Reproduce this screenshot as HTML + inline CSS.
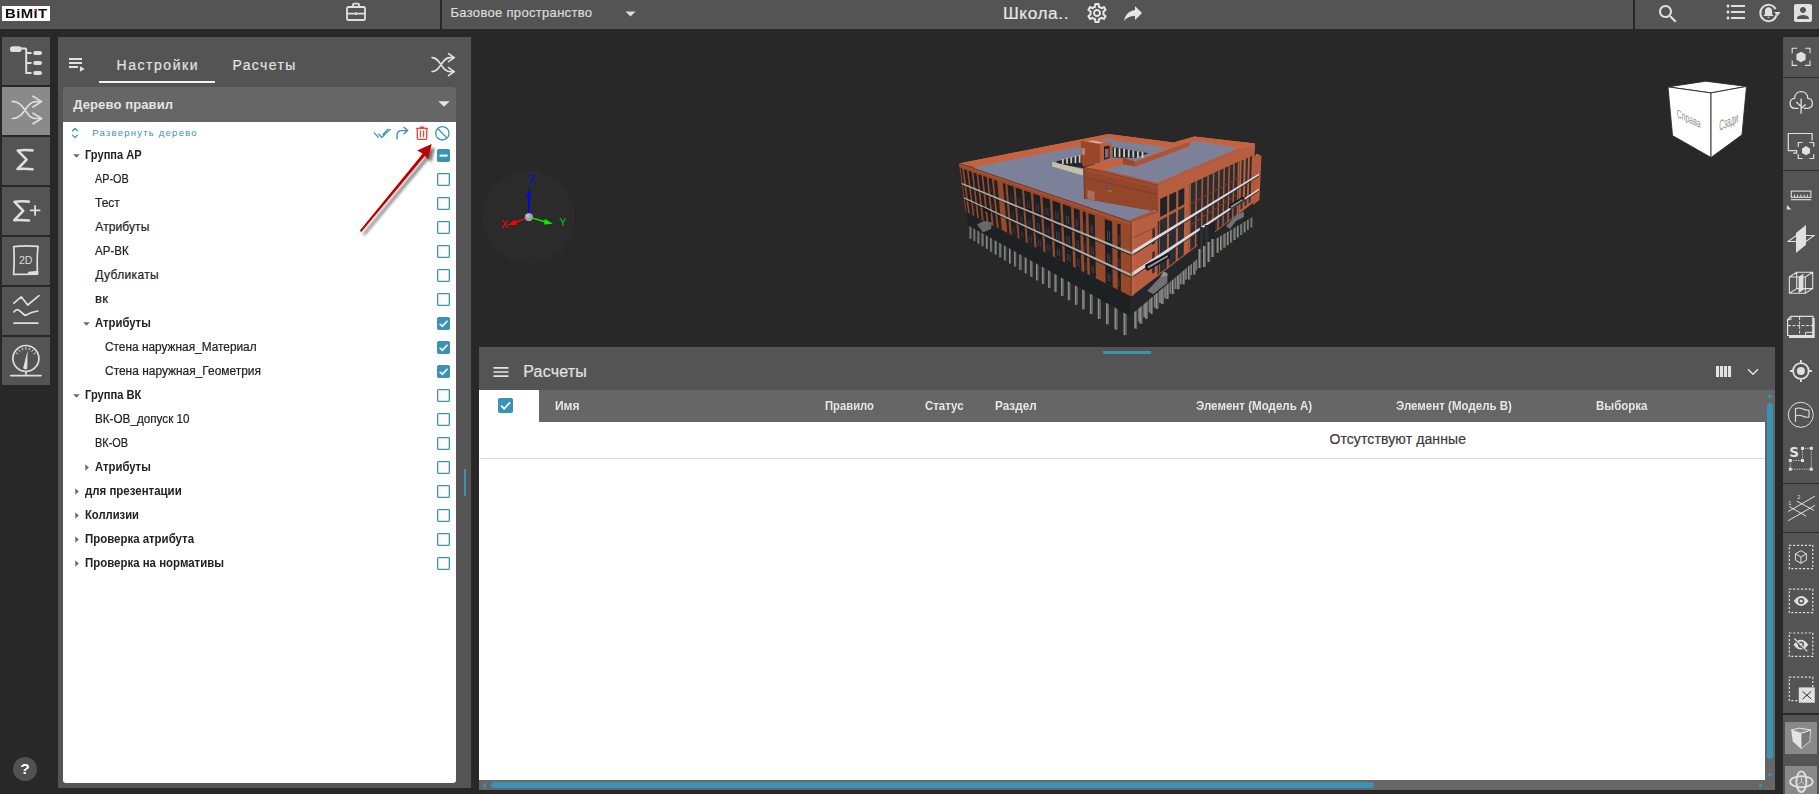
<!DOCTYPE html>
<html lang="ru"><head><meta charset="utf-8"><title>BIMIT</title><style>
html,body{margin:0;padding:0;background:#282828;}
body{width:1819px;height:794px;overflow:hidden;position:relative;font-family:"Liberation Sans",sans-serif;}
.t{position:absolute;white-space:nowrap;transform-origin:0 50%;display:block;}
svg{overflow:visible;display:block;}
i,b{font-style:normal;font-weight:normal;}
</style></head>
<body>
<svg style="position:absolute;left:0;top:0" width="1819" height="794" viewBox="0 0 1819 794"><rect x="969.6" y="225.1" width="1.7" height="13.6" fill="#8c8e8a"/><rect x="970.5" y="225.1" width="0.8" height="13.6" fill="#5f615f"/><rect x="973.5" y="227.3" width="1.7" height="13.8" fill="#8c8e8a"/><rect x="974.4" y="227.3" width="0.8" height="13.8" fill="#5f615f"/><rect x="977.5" y="229.6" width="1.8" height="14.1" fill="#8c8e8a"/><rect x="978.5" y="229.6" width="0.8" height="14.1" fill="#5f615f"/><rect x="981.6" y="231.9" width="1.8" height="14.3" fill="#8c8e8a"/><rect x="982.6" y="231.9" width="0.8" height="14.3" fill="#5f615f"/><rect x="985.9" y="234.3" width="1.8" height="14.6" fill="#8c8e8a"/><rect x="986.9" y="234.3" width="0.8" height="14.6" fill="#5f615f"/><rect x="990.2" y="236.8" width="1.9" height="14.8" fill="#8c8e8a"/><rect x="991.2" y="236.8" width="0.8" height="14.8" fill="#5f615f"/><rect x="994.7" y="239.4" width="1.9" height="15.1" fill="#8c8e8a"/><rect x="995.8" y="239.4" width="0.9" height="15.1" fill="#5f615f"/><rect x="999.3" y="242.0" width="1.9" height="15.4" fill="#8c8e8a"/><rect x="1000.4" y="242.0" width="0.9" height="15.4" fill="#5f615f"/><rect x="1004.1" y="244.7" width="2.0" height="15.7" fill="#8c8e8a"/><rect x="1005.2" y="244.7" width="0.9" height="15.7" fill="#5f615f"/><rect x="1009.0" y="247.5" width="2.0" height="15.9" fill="#8c8e8a"/><rect x="1010.1" y="247.5" width="0.9" height="15.9" fill="#5f615f"/><rect x="1014.1" y="250.3" width="2.0" height="16.2" fill="#8c8e8a"/><rect x="1015.2" y="250.3" width="0.9" height="16.2" fill="#5f615f"/><rect x="1019.3" y="253.3" width="2.1" height="16.6" fill="#8c8e8a"/><rect x="1020.4" y="253.3" width="0.9" height="16.6" fill="#5f615f"/><rect x="1024.7" y="256.4" width="2.1" height="16.9" fill="#8c8e8a"/><rect x="1025.9" y="256.4" width="1.0" height="16.9" fill="#5f615f"/><rect x="1030.2" y="259.5" width="2.2" height="17.2" fill="#8c8e8a"/><rect x="1031.4" y="259.5" width="1.0" height="17.2" fill="#5f615f"/><rect x="1036.0" y="262.8" width="2.2" height="17.5" fill="#8c8e8a"/><rect x="1037.2" y="262.8" width="1.0" height="17.5" fill="#5f615f"/><rect x="1041.9" y="266.1" width="2.3" height="17.9" fill="#8c8e8a"/><rect x="1043.2" y="266.1" width="1.0" height="17.9" fill="#5f615f"/><rect x="1048.1" y="269.6" width="2.3" height="18.3" fill="#8c8e8a"/><rect x="1049.3" y="269.6" width="1.0" height="18.3" fill="#5f615f"/><rect x="1054.4" y="273.2" width="2.3" height="18.6" fill="#8c8e8a"/><rect x="1055.7" y="273.2" width="1.1" height="18.6" fill="#5f615f"/><rect x="1061.0" y="277.0" width="2.4" height="19.0" fill="#8c8e8a"/><rect x="1062.3" y="277.0" width="1.1" height="19.0" fill="#5f615f"/><rect x="1067.8" y="280.8" width="2.4" height="19.4" fill="#8c8e8a"/><rect x="1069.2" y="280.8" width="1.1" height="19.4" fill="#5f615f"/><rect x="1074.9" y="284.9" width="2.5" height="19.9" fill="#8c8e8a"/><rect x="1076.3" y="284.9" width="1.1" height="19.9" fill="#5f615f"/><rect x="1082.2" y="289.0" width="2.6" height="20.3" fill="#8c8e8a"/><rect x="1083.7" y="289.0" width="1.2" height="20.3" fill="#5f615f"/><rect x="1089.9" y="293.3" width="2.6" height="20.7" fill="#8c8e8a"/><rect x="1091.3" y="293.3" width="1.2" height="20.7" fill="#5f615f"/><rect x="1097.8" y="297.8" width="2.7" height="21.2" fill="#8c8e8a"/><rect x="1099.2" y="297.8" width="1.2" height="21.2" fill="#5f615f"/><rect x="1106.0" y="302.5" width="2.7" height="21.7" fill="#8c8e8a"/><rect x="1107.5" y="302.5" width="1.2" height="21.7" fill="#5f615f"/><rect x="1114.5" y="307.3" width="2.8" height="22.2" fill="#8c8e8a"/><rect x="1116.1" y="307.3" width="1.3" height="22.2" fill="#5f615f"/><rect x="1123.5" y="312.4" width="2.9" height="22.7" fill="#8c8e8a"/><rect x="1125.0" y="312.4" width="1.3" height="22.7" fill="#5f615f"/><rect x="1134.3" y="307.7" width="2.8" height="20.8" fill="#939591"/><rect x="1135.8" y="307.7" width="1.2" height="20.8" fill="#626462"/><rect x="1139.6" y="303.1" width="2.7" height="20.5" fill="#939591"/><rect x="1141.1" y="303.1" width="1.2" height="20.5" fill="#626462"/><rect x="1145.0" y="298.5" width="2.7" height="20.2" fill="#939591"/><rect x="1146.5" y="298.5" width="1.2" height="20.2" fill="#626462"/><rect x="1150.4" y="294.0" width="2.6" height="19.8" fill="#939591"/><rect x="1151.8" y="294.0" width="1.2" height="19.8" fill="#626462"/><rect x="1155.7" y="289.4" width="2.6" height="19.5" fill="#939591"/><rect x="1157.1" y="289.4" width="1.2" height="19.5" fill="#626462"/><rect x="1161.1" y="284.8" width="2.5" height="19.2" fill="#939591"/><rect x="1162.5" y="284.8" width="1.1" height="19.2" fill="#626462"/><rect x="1166.4" y="280.2" width="2.5" height="18.8" fill="#939591"/><rect x="1167.8" y="280.2" width="1.1" height="18.8" fill="#626462"/><rect x="1171.8" y="275.6" width="2.4" height="18.5" fill="#939591"/><rect x="1173.1" y="275.6" width="1.1" height="18.5" fill="#626462"/><rect x="1177.1" y="271.0" width="2.4" height="18.2" fill="#939591"/><rect x="1178.5" y="271.0" width="1.1" height="18.2" fill="#626462"/><rect x="1182.5" y="266.5" width="2.3" height="17.8" fill="#939591"/><rect x="1183.8" y="266.5" width="1.0" height="17.8" fill="#626462"/><rect x="1187.9" y="261.9" width="2.3" height="17.5" fill="#939591"/><rect x="1189.1" y="261.9" width="1.0" height="17.5" fill="#626462"/><rect x="1193.2" y="257.3" width="2.2" height="17.2" fill="#939591"/><rect x="1194.4" y="257.3" width="1.0" height="17.2" fill="#626462"/><rect x="1138.1" y="306.8" width="2.0" height="14.9" fill="#7d7f7c"/><rect x="1143.3" y="302.4" width="1.9" height="14.6" fill="#7d7f7c"/><rect x="1148.6" y="298.0" width="1.9" height="14.4" fill="#7d7f7c"/><rect x="1153.8" y="293.5" width="1.9" height="14.1" fill="#7d7f7c"/><rect x="1159.0" y="289.1" width="1.9" height="13.9" fill="#7d7f7c"/><rect x="1164.2" y="284.7" width="1.8" height="13.6" fill="#7d7f7c"/><rect x="1169.5" y="280.3" width="1.8" height="13.4" fill="#7d7f7c"/><rect x="1174.7" y="275.9" width="1.8" height="13.1" fill="#7d7f7c"/><rect x="1179.9" y="271.5" width="1.7" height="12.9" fill="#7d7f7c"/><rect x="1185.1" y="267.0" width="1.7" height="12.6" fill="#7d7f7c"/><rect x="1190.4" y="262.6" width="1.6" height="12.4" fill="#7d7f7c"/><rect x="1195.6" y="258.2" width="1.6" height="12.1" fill="#7d7f7c"/><rect x="1216.6" y="235.9" width="2.2" height="16.8" fill="#8e908c"/><rect x="1217.8" y="235.9" width="1.0" height="16.8" fill="#626462"/><rect x="1220.0" y="233.7" width="2.1" height="16.5" fill="#8e908c"/><rect x="1221.2" y="233.7" width="1.0" height="16.5" fill="#626462"/><rect x="1223.4" y="231.5" width="2.1" height="16.1" fill="#8e908c"/><rect x="1224.5" y="231.5" width="0.9" height="16.1" fill="#626462"/><rect x="1226.8" y="229.4" width="2.0" height="15.7" fill="#8e908c"/><rect x="1227.9" y="229.4" width="0.9" height="15.7" fill="#626462"/><rect x="1230.1" y="227.2" width="2.0" height="15.4" fill="#8e908c"/><rect x="1231.2" y="227.2" width="0.9" height="15.4" fill="#626462"/><rect x="1233.5" y="225.0" width="2.0" height="15.0" fill="#8e908c"/><rect x="1234.6" y="225.0" width="0.9" height="15.0" fill="#626462"/><rect x="1236.9" y="222.8" width="1.9" height="14.6" fill="#8e908c"/><rect x="1238.0" y="222.8" width="0.9" height="14.6" fill="#626462"/><rect x="1240.3" y="220.6" width="1.9" height="14.3" fill="#8e908c"/><rect x="1241.3" y="220.6" width="0.8" height="14.3" fill="#626462"/><rect x="1243.7" y="218.5" width="1.8" height="13.9" fill="#8e908c"/><rect x="1244.7" y="218.5" width="0.8" height="13.9" fill="#626462"/><rect x="1247.1" y="216.3" width="1.8" height="13.5" fill="#8e908c"/><rect x="1248.0" y="216.3" width="0.8" height="13.5" fill="#626462"/><rect x="1250.5" y="214.1" width="1.7" height="13.2" fill="#8e908c"/><rect x="1251.4" y="214.1" width="0.8" height="13.2" fill="#626462"/><polygon points="965.6,211.4 1131.2,296.5 1129.8,316.0 968.0,225.3" fill="#1e2124" /><polygon points="1131.2,296.5 1197.6,247.6 1197.6,258.7 1129.8,316.0" fill="#24272a" /><polygon points="1214.8,225.4 1255.0,203.3 1255.0,215.4 1214.8,239.6" fill="#24272a" /><polygon points="959.0,163.5 1108.5,133.9 1173.6,142.5 1194.4,136.6 1254.9,143.6 1254.9,150.0 1157.6,185.1 1157.0,211.5 1131.2,222.0" fill="#7c8099" /><polygon points="959.0,163.5 1108.5,133.9 1110.0,137.5 1081.0,146.0 975.6,166.8" fill="#c8623d" /><polygon points="959.0,163.5 975.6,166.8 973.0,168.3" fill="#a04b2c" /><polygon points="959.0,163.5 1131.2,222.0 1131.2,296.5 965.6,211.4" fill="#97492b" /><polygon points="1117.4,223.4 1120.5,224.5 1120.9,291.2 1117.8,289.6" fill="#1c1f23" /><polygon points="1104.7,218.9 1112.1,221.6 1112.7,287.0 1105.6,283.3" fill="#1c1f23" /><polygon points="1088.5,213.2 1094.7,215.4 1095.9,278.4 1090.0,275.3" fill="#1c1f23" /><polygon points="1082.7,211.2 1085.7,212.2 1087.3,274.0 1084.5,272.5" fill="#1c1f23" /><polygon points="1073.8,208.0 1079.6,210.0 1081.4,270.9 1075.8,268.0" fill="#1c1f23" /><polygon points="1062.8,204.1 1071.0,207.0 1073.1,266.7 1065.2,262.6" fill="#1c1f23" /><polygon points="1052.4,200.4 1060.2,203.2 1062.7,261.3 1055.2,257.4" fill="#1c1f23" /><polygon points="1042.5,196.9 1049.9,199.6 1052.8,256.2 1045.6,252.5" fill="#1c1f23" /><polygon points="1033.1,193.6 1040.1,196.1 1043.3,251.4 1036.5,247.9" fill="#1c1f23" /><polygon points="1024.1,190.4 1030.8,192.8 1034.4,246.7 1027.9,243.4" fill="#1c1f23" /><polygon points="1015.6,187.4 1022.0,189.7 1025.8,242.3 1019.6,239.2" fill="#1c1f23" /><polygon points="1007.4,184.5 1013.5,186.7 1017.7,238.2 1011.8,235.1" fill="#1c1f23" /><polygon points="1002.8,182.9 1005.2,183.7 1009.7,234.0 1007.3,232.9" fill="#1c1f23" /><polygon points="993.9,179.7 997.1,180.9 1001.8,230.0 998.7,228.4" fill="#1c1f23" /><polygon points="988.5,177.8 991.9,179.0 996.8,227.4 993.6,225.8" fill="#1c1f23" /><polygon points="983.3,176.0 986.6,177.1 991.7,224.8 988.5,223.2" fill="#1c1f23" /><polygon points="978.3,174.2 981.4,175.3 986.7,222.2 983.7,220.7" fill="#1c1f23" /><polygon points="973.4,172.5 976.5,173.6 981.9,219.8 978.9,218.3" fill="#1c1f23" /><polygon points="968.6,170.8 971.6,171.8 977.2,217.4 974.4,215.9" fill="#1c1f23" /><polygon points="964.0,169.2 966.9,170.2 972.7,215.0 969.9,213.6" fill="#1c1f23" /><polygon points="960.5,167.9 962.1,168.5 968.1,212.7 966.5,211.8" fill="#1c1f23" /><polygon points="1118.4,235.0 1118.7,235.1 1118.8,244.6 1118.4,244.4" fill="#6b6874" opacity="0.60"/><polygon points="1119.2,235.3 1119.6,235.5 1119.7,244.9 1119.3,244.8" fill="#6b6874" opacity="0.60"/><polygon points="1118.5,258.2 1118.9,258.4 1119.0,267.1 1118.6,266.9" fill="#6b6874" opacity="0.60"/><polygon points="1119.4,258.6 1119.8,258.7 1119.8,267.5 1119.4,267.3" fill="#6b6874" opacity="0.60"/><polygon points="1118.7,278.5 1119.0,278.7 1119.1,286.7 1118.7,286.5" fill="#6b6874" opacity="0.60"/><polygon points="1119.5,278.9 1119.9,279.1 1119.9,287.1 1119.6,286.9" fill="#6b6874" opacity="0.60"/><polygon points="1107.0,230.7 1107.9,231.0 1108.0,240.2 1107.1,239.9" fill="#6b6874" opacity="0.60"/><polygon points="1109.1,231.5 1109.9,231.8 1110.0,241.0 1109.2,240.7" fill="#6b6874" opacity="0.60"/><polygon points="1107.3,253.3 1108.2,253.7 1108.3,262.2 1107.4,261.8" fill="#6b6874" opacity="0.60"/><polygon points="1109.3,254.2 1110.2,254.6 1110.3,263.1 1109.4,262.7" fill="#6b6874" opacity="0.60"/><polygon points="1107.6,273.1 1108.4,273.5 1108.5,281.3 1107.7,280.9" fill="#6b6874" opacity="0.60"/><polygon points="1109.6,274.1 1110.4,274.5 1110.5,282.3 1109.7,281.9" fill="#6b6874" opacity="0.60"/><polygon points="1090.5,224.4 1091.3,224.7 1091.5,233.6 1090.7,233.3" fill="#6b6874" opacity="0.60"/><polygon points="1092.3,225.1 1093.0,225.4 1093.2,234.3 1092.5,234.0" fill="#6b6874" opacity="0.60"/><polygon points="1091.0,246.2 1091.8,246.5 1092.0,254.7 1091.2,254.4" fill="#6b6874" opacity="0.60"/><polygon points="1092.7,247.0 1093.5,247.3 1093.7,255.5 1092.9,255.2" fill="#6b6874" opacity="0.60"/><polygon points="1091.5,265.3 1092.2,265.7 1092.4,273.2 1091.7,272.8" fill="#6b6874" opacity="0.60"/><polygon points="1093.2,266.1 1093.9,266.5 1094.1,274.0 1093.3,273.7" fill="#6b6874" opacity="0.60"/><polygon points="1083.9,221.9 1084.3,222.0 1084.5,230.8 1084.2,230.6" fill="#6b6874" opacity="0.60"/><polygon points="1084.8,222.2 1085.1,222.4 1085.3,231.1 1085.0,231.0" fill="#6b6874" opacity="0.60"/><polygon points="1084.5,243.4 1084.9,243.5 1085.1,251.6 1084.7,251.4" fill="#6b6874" opacity="0.60"/><polygon points="1085.3,243.7 1085.7,243.9 1085.9,252.0 1085.5,251.8" fill="#6b6874" opacity="0.60"/><polygon points="1085.0,262.2 1085.4,262.3 1085.6,269.7 1085.2,269.6" fill="#6b6874" opacity="0.60"/><polygon points="1085.8,262.6 1086.2,262.7 1086.4,270.1 1086.0,270.0" fill="#6b6874" opacity="0.60"/><polygon points="1075.8,218.8 1076.5,219.1 1076.8,227.7 1076.1,227.4" fill="#6b6874" opacity="0.60"/><polygon points="1077.4,219.4 1078.1,219.7 1078.4,228.3 1077.7,228.0" fill="#6b6874" opacity="0.60"/><polygon points="1076.5,239.9 1077.2,240.2 1077.4,248.1 1076.8,247.8" fill="#6b6874" opacity="0.60"/><polygon points="1078.1,240.6 1078.8,240.9 1079.0,248.8 1078.3,248.5" fill="#6b6874" opacity="0.60"/><polygon points="1077.1,258.3 1077.8,258.7 1078.0,265.9 1077.3,265.6" fill="#6b6874" opacity="0.60"/><polygon points="1078.7,259.1 1079.3,259.4 1079.6,266.7 1078.9,266.4" fill="#6b6874" opacity="0.60"/><polygon points="1065.6,214.9 1066.6,215.3 1066.9,223.7 1066.0,223.3" fill="#6b6874" opacity="0.59"/><polygon points="1067.9,215.8 1068.9,216.2 1069.2,224.6 1068.2,224.2" fill="#6b6874" opacity="0.59"/><polygon points="1066.4,235.5 1067.4,235.9 1067.7,243.7 1066.7,243.2" fill="#6b6874" opacity="0.59"/><polygon points="1068.7,236.5 1069.7,236.9 1069.9,244.7 1069.0,244.2" fill="#6b6874" opacity="0.59"/><polygon points="1067.1,253.5 1068.1,254.0 1068.4,261.1 1067.4,260.6" fill="#6b6874" opacity="0.59"/><polygon points="1069.4,254.6 1070.3,255.1 1070.6,262.2 1069.6,261.7" fill="#6b6874" opacity="0.59"/><polygon points="1055.2,211.0 1056.1,211.3 1056.5,219.5 1055.5,219.1" fill="#6b6874" opacity="0.55"/><polygon points="1057.3,211.8 1058.3,212.1 1058.6,220.3 1057.7,220.0" fill="#6b6874" opacity="0.55"/><polygon points="1056.1,231.0 1057.0,231.4 1057.4,238.9 1056.4,238.5" fill="#6b6874" opacity="0.55"/><polygon points="1058.2,231.9 1059.2,232.3 1059.5,239.9 1058.6,239.5" fill="#6b6874" opacity="0.55"/><polygon points="1056.9,248.5 1057.8,249.0 1058.1,255.9 1057.2,255.4" fill="#6b6874" opacity="0.55"/><polygon points="1059.0,249.6 1059.9,250.0 1060.3,257.0 1059.3,256.5" fill="#6b6874" opacity="0.55"/><polygon points="1045.2,207.2 1046.1,207.5 1046.5,215.5 1045.6,215.1" fill="#6b6874" opacity="0.51"/><polygon points="1047.3,208.0 1048.2,208.3 1048.6,216.3 1047.7,215.9" fill="#6b6874" opacity="0.51"/><polygon points="1046.3,226.7 1047.1,227.1 1047.5,234.5 1046.7,234.1" fill="#6b6874" opacity="0.51"/><polygon points="1048.3,227.6 1049.2,228.0 1049.6,235.4 1048.7,235.0" fill="#6b6874" opacity="0.51"/><polygon points="1047.2,243.8 1048.1,244.3 1048.4,251.0 1047.6,250.6" fill="#6b6874" opacity="0.51"/><polygon points="1049.2,244.8 1050.1,245.2 1050.4,252.0 1049.6,251.6" fill="#6b6874" opacity="0.51"/><polygon points="1035.8,203.6 1036.6,203.9 1037.1,211.7 1036.2,211.3" fill="#6b6874" opacity="0.47"/><polygon points="1037.7,204.3 1038.6,204.6 1039.0,212.5 1038.2,212.1" fill="#6b6874" opacity="0.47"/><polygon points="1036.9,222.7 1037.8,223.0 1038.2,230.2 1037.4,229.8" fill="#6b6874" opacity="0.47"/><polygon points="1038.9,223.5 1039.7,223.9 1040.1,231.1 1039.3,230.7" fill="#6b6874" opacity="0.47"/><polygon points="1038.0,239.4 1038.8,239.7 1039.2,246.3 1038.4,245.9" fill="#6b6874" opacity="0.47"/><polygon points="1039.9,240.3 1040.7,240.7 1041.1,247.3 1040.3,246.9" fill="#6b6874" opacity="0.47"/><polygon points="1026.7,200.2 1027.5,200.5 1028.1,208.0 1027.3,207.7" fill="#6b6874" opacity="0.43"/><polygon points="1028.6,200.9 1029.4,201.2 1029.9,208.8 1029.1,208.5" fill="#6b6874" opacity="0.43"/><polygon points="1028.0,218.8 1028.8,219.1 1029.3,226.1 1028.5,225.8" fill="#6b6874" opacity="0.43"/><polygon points="1029.9,219.6 1030.7,219.9 1031.1,227.0 1030.4,226.6" fill="#6b6874" opacity="0.43"/><polygon points="1029.2,235.1 1029.9,235.5 1030.4,241.9 1029.6,241.5" fill="#6b6874" opacity="0.43"/><polygon points="1031.0,236.0 1031.8,236.3 1032.2,242.8 1031.4,242.4" fill="#6b6874" opacity="0.43"/><polygon points="1018.2,196.9 1018.9,197.2 1019.5,204.6 1018.7,204.3" fill="#6b6874" opacity="0.38"/><polygon points="1019.9,197.6 1020.7,197.9 1021.3,205.3 1020.5,205.0" fill="#6b6874" opacity="0.38"/><polygon points="1019.6,215.1 1020.3,215.4 1020.8,222.3 1020.1,221.9" fill="#6b6874" opacity="0.38"/><polygon points="1021.3,215.9 1022.1,216.2 1022.6,223.1 1021.8,222.7" fill="#6b6874" opacity="0.38"/><polygon points="1020.8,231.0 1021.5,231.4 1022.0,237.6 1021.3,237.3" fill="#6b6874" opacity="0.38"/><polygon points="1022.5,231.9 1023.3,232.2 1023.7,238.5 1023.0,238.1" fill="#6b6874" opacity="0.38"/><polygon points="1010.0,193.8 1010.7,194.0 1011.3,201.3 1010.6,201.0" fill="#6b6874" opacity="0.34"/><polygon points="1011.7,194.4 1012.4,194.7 1013.0,202.0 1012.3,201.7" fill="#6b6874" opacity="0.34"/><polygon points="1011.5,211.6 1012.2,211.9 1012.7,218.6 1012.0,218.2" fill="#6b6874" opacity="0.34"/><polygon points="1013.1,212.3 1013.9,212.6 1014.4,219.3 1013.7,219.0" fill="#6b6874" opacity="0.34"/><polygon points="1012.8,227.1 1013.5,227.5 1014.0,233.6 1013.3,233.2" fill="#6b6874" opacity="0.34"/><polygon points="1014.4,227.9 1015.1,228.3 1015.6,234.4 1014.9,234.1" fill="#6b6874" opacity="0.34"/><polygon points="1004.3,191.6 1004.6,191.7 1005.2,198.9 1004.9,198.7" fill="#6b6874" opacity="0.30"/><polygon points="1005.0,191.9 1005.3,192.0 1005.9,199.1 1005.6,199.0" fill="#6b6874" opacity="0.30"/><polygon points="1005.9,209.1 1006.2,209.3 1006.8,215.8 1006.5,215.7" fill="#6b6874" opacity="0.30"/><polygon points="1006.5,209.4 1006.8,209.5 1007.4,216.1 1007.1,216.0" fill="#6b6874" opacity="0.30"/><polygon points="1007.3,224.5 1007.5,224.6 1008.1,230.6 1007.8,230.5" fill="#6b6874" opacity="0.30"/><polygon points="1007.9,224.8 1008.2,224.9 1008.7,230.9 1008.4,230.8" fill="#6b6874" opacity="0.30"/><polygon points="995.7,188.3 996.0,188.5 996.7,195.4 996.3,195.3" fill="#6b6874" opacity="0.25"/><polygon points="996.5,188.7 996.9,188.8 997.6,195.8 997.2,195.6" fill="#6b6874" opacity="0.25"/><polygon points="997.3,205.4 997.7,205.6 998.3,212.0 998.0,211.8" fill="#6b6874" opacity="0.25"/><polygon points="998.2,205.8 998.6,206.0 999.2,212.4 998.8,212.2" fill="#6b6874" opacity="0.25"/><polygon points="998.8,220.4 999.2,220.5 999.8,226.4 999.4,226.2" fill="#6b6874" opacity="0.25"/><polygon points="999.7,220.8 1000.0,221.0 1000.6,226.8 1000.2,226.7" fill="#6b6874" opacity="0.25"/><polygon points="990.4,186.3 990.8,186.5 991.5,193.3 991.1,193.2" fill="#6b6874" opacity="0.22"/><polygon points="991.3,186.7 991.7,186.8 992.4,193.7 992.0,193.5" fill="#6b6874" opacity="0.22"/><polygon points="992.1,203.1 992.5,203.3 993.2,209.6 992.8,209.4" fill="#6b6874" opacity="0.22"/><polygon points="993.0,203.5 993.4,203.7 994.1,210.0 993.7,209.9" fill="#6b6874" opacity="0.22"/><polygon points="993.6,217.9 994.0,218.0 994.6,223.8 994.2,223.6" fill="#6b6874" opacity="0.22"/><polygon points="994.6,218.3 995.0,218.5 995.5,224.3 995.2,224.1" fill="#6b6874" opacity="0.22"/><polygon points="961.9,184.2 1131.2,254.2 1131.2,255.8 962.0,185.2" fill="#15171a" opacity="0.7"/><polygon points="961.7,182.8 1131.2,251.9 1131.2,254.5 961.9,184.4" fill="#a8aaa3" /><polygon points="963.8,198.3 1131.2,276.2 1131.2,277.8 963.9,199.4" fill="#15171a" opacity="0.7"/><polygon points="963.6,196.9 1131.2,273.9 1131.2,276.5 963.8,198.5" fill="#a8aaa3" /><polygon points="959.0,163.5 1131.2,222.0 1131.2,225.4 959.3,165.7" fill="#a5502f" /><path d="M959 163.5L1131.2 222" stroke="#6a3220" stroke-width="0.700" fill="none"/><polygon points="1131.2,222.0 1157.3,212.0 1157.6,185.1 1254.9,145.5 1253.0,203.0 1131.2,296.5" fill="#b75d40" /><polygon points="1253.5,157.5 1261.5,156.0 1259.5,200.0 1253.0,205.0" fill="#b45a3d" /><polygon points="1253.5,157.5 1257.0,153.5 1261.5,156.0" fill="#c8623d" /><polygon points="1239.7,161.0 1189.5,184.2 1188.7,251.2 1238.4,213.3" fill="#2a2d31" /><polygon points="1191.0,183.5 1189.5,184.2 1188.7,252.4 1190.2,251.2" fill="#b45a3c" /><polygon points="1197.1,180.6 1195.7,181.3 1194.8,247.7 1196.3,246.5" fill="#b45a3c" /><polygon points="1203.1,177.9 1201.6,178.6 1200.7,243.1 1202.2,242.0" fill="#b45a3c" /><polygon points="1208.9,175.2 1207.4,175.9 1206.4,238.8 1207.9,237.7" fill="#b45a3c" /><polygon points="1214.4,172.7 1212.9,173.4 1211.9,234.6 1213.3,233.4" fill="#b45a3c" /><polygon points="1219.8,170.2 1218.3,170.9 1217.2,230.5 1218.6,229.4" fill="#b45a3c" /><polygon points="1225.0,167.8 1223.5,168.5 1222.3,226.6 1223.7,225.5" fill="#b45a3c" /><polygon points="1230.0,165.5 1228.5,166.2 1227.2,222.8 1228.7,221.7" fill="#b45a3c" /><polygon points="1234.8,163.3 1233.3,164.0 1232.0,219.2 1233.4,218.0" fill="#b45a3c" /><polygon points="1239.4,161.1 1237.9,161.8 1236.6,215.6 1238.0,214.5" fill="#b45a3c" /><polygon points="1239.3,176.7 1189.2,204.2 1189.2,205.8 1239.3,177.9" fill="#7a3c28" opacity="0.8"/><polygon points="1238.9,193.0 1189.0,225.1 1189.0,226.7 1238.9,194.2" fill="#7a3c28" opacity="0.8"/><polygon points="1243.7,159.8 1241.7,160.7 1240.4,209.7 1242.4,208.2" fill="#2a2d31" /><polygon points="1248.0,157.8 1246.0,158.7 1244.6,206.5 1246.6,205.0" fill="#2a2d31" /><polygon points="1252.0,155.9 1250.0,156.8 1248.6,203.5 1250.5,202.0" fill="#2a2d31" /><polygon points="1167.2,195.8 1160.2,199.0 1160.1,217.1 1167.1,213.4" fill="#202327" /><polygon points="1167.1,216.4 1160.1,220.3 1159.9,273.1 1166.8,267.9" fill="#2a2d31" /><polygon points="1176.3,191.5 1169.3,194.8 1169.2,212.2 1176.1,208.5" fill="#202327" /><polygon points="1176.1,211.5 1169.2,215.3 1168.8,266.3 1175.7,261.1" fill="#2a2d31" /><polygon points="1184.4,187.8 1178.4,190.6 1178.2,207.4 1184.2,204.2" fill="#202327" /><polygon points="1184.2,207.0 1178.2,210.3 1177.8,259.5 1183.7,255.0" fill="#2a2d31" /><polygon points="1159.3,220.7 1157.8,221.5 1157.6,274.9 1159.1,273.7" fill="#2a2d31" /><polygon points="1154.8,227.8 1152.4,229.2 1152.3,245.0 1154.8,243.5" fill="#2a2d31" /><polygon points="1154.7,250.8 1152.3,252.5 1152.2,273.9 1154.7,272.1" fill="#2a2d31" /><path d="M1131.200 238.500L1157.300 226.500" stroke="#7a3c28" stroke-width="0.600" fill="none"/><polygon points="1131.2,251.6 1259.0,173.6 1259.0,175.4 1131.2,255.3" fill="#d6dadc" /><polygon points="1131.2,255.3 1259.0,175.6 1259.0,176.4 1131.2,256.5" fill="#3a3030" /><polygon points="1131.2,272.9 1259.0,188.4 1259.0,190.2 1131.2,277.1" fill="#d6dadc" /><polygon points="1131.2,277.2 1259.0,190.4 1259.0,191.2 1131.2,278.3" fill="#3a3030" /><path d="M1131.200 222V296.500" stroke="#6a3220" stroke-width="0.800"/><path d="M1133 222V296" stroke="#c97553" stroke-width="0.800"/><polygon points="1197.6,232.0 1214.8,221.0 1214.8,236.0 1197.6,252.0" fill="#202326" /><rect x="1199.8" y="227" width="3.400" height="26" fill="#2c2f32"/><rect x="1204.8" y="225" width="3.400" height="25" fill="#2c2f32"/><rect x="1198.5" y="249" width="2.600" height="19" fill="#8f918e"/><rect x="1200.0" y="249" width="1.100" height="19" fill="#5f615f"/><rect x="1203.0" y="246" width="2.600" height="21" fill="#8f918e"/><rect x="1204.5" y="246" width="1.100" height="21" fill="#5f615f"/><rect x="1207.5" y="242" width="2.600" height="20" fill="#8f918e"/><rect x="1209.0" y="242" width="1.100" height="20" fill="#5f615f"/><rect x="1211.5" y="239" width="2.600" height="18" fill="#8f918e"/><rect x="1213.0" y="239" width="1.100" height="18" fill="#5f615f"/><polygon points="1145.2,264.8 1168.4,252.7 1170.0,255.7 1169.5,258.0 1147.5,271.0 1145.2,268.5" fill="#15171a" /><polygon points="1147.5,266.5 1167.5,255.3 1168.2,256.8 1148.5,268.3" fill="#9496a2" /><polygon points="1229.0,205.0 1243.0,196.5 1244.5,198.0 1244.5,200.5 1231.0,209.0 1229.0,207.5" fill="#15171a" /><polygon points="1230.5,206.3 1242.5,199.0 1243.0,200.5 1231.5,207.8" fill="#9496a2" /><polygon points="1147.2,291.0 1160.3,276.9 1167.4,273.8 1167.4,282.9 1153.3,294.0" fill="#6f7173" /><polygon points="1160.3,276.9 1163.5,271.5 1167.4,273.0 1167.4,276.0" fill="#8e9092" /><polygon points="1226.0,226.0 1237.0,214.5 1244.0,211.5 1244.0,217.0 1236.0,221.0 1230.0,229.0" fill="#6f7173" /><polygon points="977.0,224.5 984.0,221.0 992.0,222.5 991.0,229.0 983.0,232.5" fill="#66686a" /><polygon points="983.0,207.0 991.0,211.5 991.0,214.0 983.0,209.5" fill="#15171a" /><polygon points="1083.5,167.1 1157.6,185.1 1157.3,212.0 1084.2,199.0" fill="#94462b" /><polygon points="1083.5,167.1 1157.6,185.1 1157.6,188.5 1083.6,170.5" fill="#a04b2d" /><path d="M1083.5 167.1L1157.6 185.1" stroke="#6a3220" stroke-width="0.800" fill="none"/><path d="M1084 177.500L1157.300 194.500" stroke="#6f341f" stroke-width="0.600"/><path d="M1083.8 167.1L1084.5 199" stroke="#6a3220" stroke-width="0.700"/><polygon points="1087.5,190.0 1094.6,191.7 1094.6,200.8 1087.5,199.0" fill="#a7705d" /><polygon points="1131.2,222.0 1157.3,212.0 1155.0,210.0 1129.5,219.8" fill="#a9522f" /><polygon points="1084.2,199.0 1157.0,212.0 1155.0,210.0 1129.5,219.8 1120.0,217.0" fill="#7c8099" /><polygon points="1103.6,169.9 1157.0,183.0 1238.8,148.3 1189.7,142.7 1135.5,166.4 1123.0,164.3" fill="#7c8099" /><polygon points="1157.0,183.0 1238.8,148.3 1254.9,145.5 1157.6,185.1" fill="#b9583a" /><polygon points="1238.8,148.3 1254.9,143.6 1254.9,145.5 1240.0,149.6" fill="#c8623d" /><polygon points="1083.5,167.1 1103.6,169.9 1157.0,183.0 1157.6,185.1" fill="#a9522f" /><polygon points="1083.5,167.1 1122.5,157.5 1135.5,161.5 1189.5,141.5 1194.4,136.6 1197.0,139.5 1189.7,142.7 1135.5,166.4 1123.0,164.3 1103.6,169.9" fill="#c8623d" /><polygon points="1122.5,157.5 1135.5,161.5 1135.5,166.4 1123.0,164.3" fill="#9c482b" /><polygon points="1135.5,161.5 1189.5,141.5 1189.7,146.0 1135.5,166.4" fill="#b4522f" /><polygon points="1173.6,142.5 1194.4,136.6 1254.9,143.6 1238.8,148.3 1195.0,140.5 1176.0,146.0" fill="#c8623d" /><polygon points="1108.5,133.9 1173.6,142.5 1173.6,146.5 1150.0,152.5 1112.0,139.5" fill="#c8623d" /><polygon points="1118.0,141.0 1166.0,147.0 1150.0,152.0 1114.0,146.5" fill="#7c8099" /><polygon points="1112.6,147.0 1148.6,153.2 1134.8,158.0 1112.6,157.4" fill="#23272a" /><rect x="1114.0" y="147.5" width="1.800" height="9.5" fill="#cfcdbf"/><rect x="1118.6" y="148.2" width="1.800" height="8.9" fill="#cfcdbf"/><rect x="1123.2" y="149.0" width="1.800" height="8.3" fill="#cfcdbf"/><rect x="1127.8" y="149.8" width="1.800" height="7.7" fill="#cfcdbf"/><rect x="1132.4" y="150.5" width="1.800" height="7.1" fill="#cfcdbf"/><rect x="1137.0" y="151.2" width="1.800" height="6.5" fill="#cfcdbf"/><rect x="1141.6" y="152.0" width="1.800" height="5.9" fill="#cfcdbf"/><polygon points="1056.6,161.3 1094.6,152.5 1094.6,164.3 1082.9,168.0 1056.6,164.0" fill="#23272a" /><rect x="1062.0" y="159.0" width="1.700" height="5.0" fill="#cfcdbf"/><rect x="1066.2" y="158.1" width="1.700" height="5.6" fill="#cfcdbf"/><rect x="1070.4" y="157.2" width="1.700" height="6.2" fill="#cfcdbf"/><rect x="1074.6" y="156.3" width="1.700" height="6.8" fill="#cfcdbf"/><rect x="1078.8" y="155.4" width="1.700" height="7.4" fill="#cfcdbf"/><rect x="1083.0" y="154.5" width="1.700" height="8.0" fill="#cfcdbf"/><rect x="1087.2" y="153.6" width="1.700" height="8.6" fill="#cfcdbf"/><rect x="1091.4" y="152.7" width="1.700" height="9.2" fill="#cfcdbf"/><polygon points="1052.2,161.7 1083.0,169.3 1083.0,175.6 1052.2,166.6" fill="#c4c0a8" /><polygon points="1080.8,140.8 1100.0,144.3 1100.0,162.5 1083.5,167.1 1081.5,163.0" fill="#9a482b" /><polygon points="1100.0,144.3 1112.0,143.0 1112.0,158.5 1100.0,162.5" fill="#b75d40" /><polygon points="1080.8,140.8 1092.0,139.3 1112.0,143.0 1100.0,144.3" fill="#c8623d" /><polygon points="1087.0,141.3 1093.0,140.5 1104.0,142.7 1099.0,143.4" fill="#c9b8a8" /><polygon points="1104.0,146.5 1109.5,145.8 1109.5,158.0 1104.0,159.8" fill="#1c1f23" /><polygon points="1105.0,149.0 1108.5,148.5 1108.5,157.0 1105.0,158.2" fill="#7f6a6e" /><polygon points="1081.5,148.0 1085.0,148.6 1085.0,155.0 1081.5,154.5" fill="#b38673" /><path d="M1107.300 184.500V190.500" stroke="#4a3fd0" stroke-width="0.800"/><path d="M1107.300 190.500L1103.500 192" stroke="#e02020" stroke-width="0.900"/><path d="M1107.300 190.500L1112 191.300" stroke="#20d020" stroke-width="1.100"/></svg><svg style="position:absolute;left:0;top:0" width="700" height="300" viewBox="0 0 700 300"><circle cx="528.900" cy="217.100" r="46" fill="#2b2b2b"/><path d="M528.900 217.100L512 223.500" stroke="#ff0000" stroke-width="1.500"/><path d="M507.300 225.300L514.800 219.800L516.200 224.400z" fill="#ff0000"/><ellipse cx="514.300" cy="222.700" rx="2.400" ry="2.200" fill="#ff0000"/><path d="M528.900 217.100L546 222" stroke="#00ee00" stroke-width="1.500"/><path d="M552.900 223.700L544.800 218.800L544 224.600z" fill="#00ee00"/><path d="M528.900 217.100V197" stroke="#0000ff" stroke-width="1.600"/><path d="M528.900 188.700L526.600 197.300H531.200z" fill="#0000ff"/><circle cx="528.900" cy="217.100" r="4.200" fill="#a0a0a0"/><circle cx="527.800" cy="216" r="2" fill="#bdbdbd"/><text x="529" y="182.500" font-family="Liberation Sans,sans-serif" font-size="10" fill="#0000ff">Z</text><text x="501.200" y="227.500" font-family="Liberation Sans,sans-serif" font-size="10" fill="#ff0000">X</text><text x="559.500" y="225.600" font-family="Liberation Sans,sans-serif" font-size="10" fill="#00cc00">Y</text></svg><svg style="position:absolute;left:0;top:0" width="1819" height="300" viewBox="0 0 1819 300"><polygon points="1668.0,86.9 1705.7,81.2 1746.5,86.4 1711.0,92.9" fill="#ffffff" stroke="#2b2b2b" stroke-width="0.900" stroke-linejoin="round"/><polygon points="1668.0,86.9 1711.0,92.9 1711.0,157.5 1672.5,135.6" fill="#ffffff" stroke="#2b2b2b" stroke-width="0.900" stroke-linejoin="round"/><polygon points="1711.0,92.9 1746.5,86.4 1742.0,134.8 1711.0,157.5" fill="#ffffff" stroke="#2b2b2b" stroke-width="0.900" stroke-linejoin="round"/><text font-family="Liberation Sans,sans-serif" fill="#8e8e8e" font-size="8.600" transform="translate(1676.800 117) skewY(25) scale(0.800 1.350)">Справа</text><text font-family="Liberation Sans,sans-serif" fill="#8e8e8e" font-size="8.200" transform="translate(1719.300 131) skewY(-25) scale(0.800 1.800)">Сзади</text></svg>
<div style="position:absolute;left:0px;top:0px;width:1819px;height:29px;background:#545454;"></div>
<div style="position:absolute;left:2px;top:6px;width:48px;height:15px;background:#fff;overflow:hidden;"><span class="t" style="left:3.400px;top:1.500px;font-size:12.400px;line-height:12px;color:#111;font-weight:700;letter-spacing:0.300px;transform:scaleX(1.205)">BiMiT</span><i style="position:absolute;left:33.100px;top:3.100px;width:2.100px;height:1.900px;background:#f00"></i></div>
<svg style="position:absolute;left:344px;top:0.2px;" width="24" height="24" viewBox="0 0 24 24"><rect x="3" y="7" width="18" height="13" rx="1.6" fill="none" stroke="#e0e0e0" stroke-width="1.8"/><path d="M9 7V4.6a1 1 0 0 1 1-1h4a1 1 0 0 1 1 1V7" fill="none" stroke="#e0e0e0" stroke-width="1.8"/><path d="M3 13.6h7.6M13.4 13.6H21" stroke="#e0e0e0" stroke-width="1.6"/><rect x="10.6" y="12.4" width="2.8" height="2.6" fill="#e0e0e0"/></svg>
<div style="position:absolute;left:439.5px;top:0px;width:2px;height:29px;background:#282828;"></div>
<span class="t" style="left:450.50px;top:6.20px;font-size:13px;line-height:13px;color:#dcdcdc;-webkit-text-stroke:0.2px #dcdcdc;letter-spacing:0.315px;">Базовое пространство</span>
<svg style="position:absolute;left:625px;top:10.5px;" width="11" height="6" viewBox="0 0 11 6"><path d="M0.4 0.4h10.2L5.5 5.6z" fill="#dcdcdc"/></svg>
<span class="t" style="left:1003.00px;top:4.94px;font-size:17.2px;line-height:17.2px;color:#e6e6e6;-webkit-text-stroke:0.2px #e6e6e6;letter-spacing:0.612px;">Школа..</span>
<svg style="position:absolute;left:1084.8px;top:0.8px;" width="24" height="24" viewBox="0 0 24 24"><path d="M19.43 12.98c.04-.32.07-.64.07-.98 0-.34-.03-.66-.07-.98l2.11-1.65c.19-.15.24-.42.12-.64l-2-3.46c-.09-.16-.26-.25-.44-.25-.06 0-.12.01-.17.03l-2.49 1c-.52-.4-1.08-.73-1.69-.98l-.38-2.65C14.46 2.18 14.25 2 14 2h-4c-.25 0-.46.18-.49.42l-.38 2.65c-.61.25-1.17.59-1.69.98l-2.49-1c-.06-.02-.12-.03-.18-.03-.17 0-.34.09-.43.25l-2 3.46c-.13.22-.07.49.12.64l2.11 1.65c-.04.32-.07.65-.07.98 0 .33.03.66.07.98l-2.11 1.65c-.19.15-.24.42-.12.64l2 3.46c.09.16.26.25.44.25.06 0 .12-.01.17-.03l2.49-1c.52.4 1.08.73 1.69.98l.38 2.65c.03.24.24.42.49.42h4c.25 0 .46-.18.49-.42l.38-2.65c.61-.25 1.17-.59 1.69-.98l2.49 1c.06.02.12.03.18.03.17 0 .34-.09.43-.25l2-3.46c.12-.22.07-.49-.12-.64l-2.11-1.65zm-1.98-1.71c.04.31.05.52.05.73 0 .21-.02.43-.05.73l-.14 1.13.89.7 1.08.84-.7 1.21-1.27-.51-1.04-.42-.9.68c-.43.32-.84.56-1.25.73l-1.06.43-.16 1.13-.2 1.35h-1.4l-.19-1.35-.16-1.13-1.06-.43c-.43-.18-.83-.41-1.23-.71l-.91-.7-1.06.43-1.27.51-.7-1.21 1.08-.84.89-.7-.14-1.13c-.03-.31-.05-.54-.05-.74s.02-.43.05-.73l.14-1.13-.89-.7-1.08-.84.7-1.21 1.27.51 1.04.42.9-.68c.43-.32.84-.56 1.25-.73l1.06-.43.16-1.13.2-1.35h1.39l.19 1.35.16 1.13 1.06.43c.43.18.83.41 1.23.71l.91.7 1.06-.43 1.27-.51.7 1.21-1.07.85-.89.7.14 1.13zM12 8c-2.21 0-4 1.79-4 4s1.79 4 4 4 4-1.79 4-4-1.79-4-4-4zm0 6c-1.1 0-2-.9-2-2s.9-2 2-2 2 .9 2 2-.9 2-2 2z" fill="#e6e6e6"/></svg>
<svg style="position:absolute;left:1120.5px;top:0.5px;" width="24" height="24" viewBox="0 0 24 24"><path d="M21 12l-7-7v4C7 10 4 15 3 20c2.5-3.5 6-5.1 11-5.1V19l7-7z" fill="#e6e6e6"/></svg>
<div style="position:absolute;left:1633px;top:0px;width:2px;height:29px;background:#282828;"></div>
<svg style="position:absolute;left:1655.6px;top:1.7px;" width="24" height="24" viewBox="0 0 24 24"><path d="M15.5 14h-.79l-.28-.27C15.41 12.59 16 11.11 16 9.5 16 5.91 13.09 3 9.5 3S3 5.91 3 9.5 5.91 16 9.5 16c1.61 0 3.09-.59 4.23-1.57l.27.28v.79l5 4.99L20.49 19l-4.99-5zm-6 0C7.01 14 5 11.99 5 9.5S7.01 5 9.5 5 14 7.01 14 9.5 11.99 14 9.5 14z" fill="#e0e0e0"/></svg>
<svg style="position:absolute;left:1723.5px;top:0px;" width="24" height="24" viewBox="0 0 24 24"><path d="M4 10.5c-.83 0-1.5.67-1.5 1.5s.67 1.5 1.5 1.5 1.5-.67 1.5-1.5-.67-1.5-1.5-1.5zm0-6c-.83 0-1.5.67-1.5 1.5S3.17 7.500 4 7.500 5.500 6.830 5.500 6 4.830 4.500 4 4.500zm0 12c-.83 0-1.5.68-1.5 1.5s.68 1.5 1.5 1.5 1.5-.68 1.5-1.5-.67-1.500-1.500-1.500zM7 19h14v-2H7v2zm0-6h14v-2H7v2zm0-8v2h14V5H7z" fill="#e0e0e0"/></svg>
<svg style="position:absolute;left:1757px;top:1px;" width="24" height="24" viewBox="0 0 24 24"><path d="M3.3 12a8.200 8.200 0 1 0 2.600-6" fill="none" stroke="#e0e0e0" stroke-width="2" transform="rotate(150 11.500 12)"/><path d="M17.300 11h6.200l-3.100 4.200z" fill="#e0e0e0"/><path d="M11.5 6.3c-2.2 0-3.6 1.7-3.6 3.9v3l-1.2 1.3v.6h9.600v-.6l-1.200-1.300v-3c0-2.200-1.400-3.900-3.600-3.900zM10.400 15.800a1.100 1.100 0 0 0 2.200 0z" fill="#e0e0e0"/></svg>
<svg style="position:absolute;left:1791px;top:0.9px;" width="24" height="24" viewBox="0 0 24 24"><path d="M3 5v14c0 1.100.89 2 2 2h14c1.100 0 2-.9 2-2V5c0-1.100-.9-2-2-2H5c-1.110 0-2 .9-2 2zm12 4c0 1.660-1.340 3-3 3s-3-1.340-3-3 1.340-3 3-3 3 1.340 3 3zm-9 8c0-2 4-3.100 6-3.100s6 1.100 6 3.100v1H6v-1z" fill="#e0e0e0"/></svg>
<div style="position:absolute;left:2px;top:37px;width:48px;height:48px;background:#545454;"><svg width="48" height="48" viewBox="0 0 48 48" style="position:absolute;left:0;top:0"><rect x="8" y="9.3" width="11.6" height="5.7" rx="2.85" fill="#dedede"/><path d="M19 11.400h4.200q1 0 1 1V36h4.600M24.200 16.100h4.600M24.200 26h4.600" fill="none" stroke="#dedede" stroke-linecap="round" stroke-linejoin="round" stroke-width="2" stroke-linecap="butt"/><rect x="31.200" y="14" width="8.800" height="4" rx="2" fill="#dedede"/><rect x="31.200" y="24" width="8.800" height="4" rx="2" fill="#dedede"/><rect x="31.200" y="34" width="8.800" height="4" rx="2" fill="#dedede"/></svg></div>
<div style="position:absolute;left:2px;top:87px;width:48px;height:48px;background:#8a8a8a;"><svg width="48" height="48" viewBox="0 0 48 48" style="position:absolute;left:0;top:0"><path d="M10.400 14.400C23.400 14.400 23 31.500 34 31.500H39M10.400 31.500C23.400 31.500 23 14.600 34 14.600H39" fill="none" stroke="#dedede" stroke-linecap="round" stroke-linejoin="round" stroke-width="1.700"/><path d="M31 9.200L39.600 14.600L31 20M31 26.300L39.600 31.500L31 36.800" fill="none" stroke="#dedede" stroke-linecap="round" stroke-linejoin="round" stroke-width="1.700"/></svg></div>
<div style="position:absolute;left:2px;top:137px;width:48px;height:48px;background:#545454;"><svg width="48" height="48" viewBox="0 0 48 48" style="position:absolute;left:0;top:0"><path d="M30.500 13.400Q22 12.600 15.800 13.600L24.600 22.600L15.600 32Q23 31.400 30.600 32.300" fill="none" stroke="#dedede" stroke-linecap="round" stroke-linejoin="round" stroke-width="2.600"/></svg></div>
<div style="position:absolute;left:2px;top:187px;width:48px;height:48px;background:#545454;"><svg width="48" height="48" viewBox="0 0 48 48" style="position:absolute;left:0;top:0"><path d="M26.800 14.600Q19 13.800 12.600 14.800L21.200 23.800L12.300 33.200Q19.500 32.600 27 33.500" fill="none" stroke="#dedede" stroke-linecap="round" stroke-linejoin="round" stroke-width="2.600"/><path d="M28.600 23.400h9M33.100 18.900v9" fill="none" stroke="#dedede" stroke-linecap="round" stroke-linejoin="round" stroke-width="1.800"/></svg></div>
<div style="position:absolute;left:2px;top:237px;width:48px;height:48px;background:#545454;"><svg width="48" height="48" viewBox="0 0 48 48" style="position:absolute;left:0;top:0"><path d="M11.800 9.600Q23 8.200 36 9.400Q34.600 23 35.600 37.200L11.600 37.400Q12.600 23 11.800 9.600z" fill="none" stroke="#dedede" stroke-linecap="round" stroke-linejoin="round" stroke-width="1.700"/><path d="M25.500 37.200L26.500 34.800L35.200 33.800L35.600 37.200z" fill="#dedede"/><text x="23.600" y="26.800" font-size="10.500" text-anchor="middle" fill="#dedede" font-family="Liberation Sans,sans-serif">2D</text></svg></div>
<div style="position:absolute;left:2px;top:287px;width:48px;height:48px;background:#545454;"><svg width="48" height="48" viewBox="0 0 48 48" style="position:absolute;left:0;top:0"><path d="M11.900 16.200L19.200 9.800L25.700 18L37 8.600M11.900 24.900Q14.500 21.500 17 23.300L23.200 28.500L29.500 25.500L35.800 24M11.900 36.200H35.800" fill="none" stroke="#dedede" stroke-linecap="round" stroke-linejoin="round" stroke-width="1.700"/></svg></div>
<div style="position:absolute;left:2px;top:337px;width:48px;height:48px;background:#545454;"><svg width="48" height="48" viewBox="0 0 48 48" style="position:absolute;left:0;top:0"><circle cx="23.900" cy="21.500" r="13" fill="none" stroke="#dedede" stroke-linecap="round" stroke-linejoin="round" stroke-width="1.700"/><path d="M15.9 16.9L14.4 16.0M18.0 14.5L16.8 13.1M20.8 12.9L20.1 11.2M23.9 12.3L23.9 10.5M27.0 12.9L27.7 11.2M29.8 14.5L31.0 13.1M31.9 16.9L33.4 16.0" fill="none" stroke="#dedede" stroke-linecap="round" stroke-linejoin="round" stroke-width="1"/><path d="M25.600 13.500L25.300 31.500Q23 33.500 21.200 31z" fill="#dedede"/><path d="M23.900 34.500V38.600M8.800 38.600H39" fill="none" stroke="#dedede" stroke-linecap="round" stroke-linejoin="round" stroke-width="1.700"/></svg></div>
<div style="position:absolute;left:13px;top:756.5px;width:24px;height:24px;background:#525252;border-radius:50%;"><span class="t" style="left:7.300px;top:4.600px;font-size:15.500px;line-height:15px;color:#fff;font-weight:700">?</span></div>
<div style="position:absolute;left:58px;top:37px;width:413px;height:751px;background:#545454;"></div>
<svg style="position:absolute;left:69px;top:58px;" width="17" height="14" viewBox="0 0 17 14"><path d="M0 0h13v2H0zM0 4.100h13v2H0zM0 8h9v2H0zM10.900 8.300v5.500l4.800-2.750z" fill="#e2e2e2"/></svg>
<span class="t" style="left:116.50px;top:58.15px;font-size:14px;line-height:14px;color:#e2e2e2;-webkit-text-stroke:0.2px #e2e2e2;letter-spacing:1.545px;">Настройки</span>
<span class="t" style="left:232.40px;top:58.15px;font-size:14px;line-height:14px;color:#e2e2e2;-webkit-text-stroke:0.2px #e2e2e2;letter-spacing:1.401px;">Расчеты</span>
<div style="position:absolute;left:99px;top:81.2px;width:116px;height:2.2px;background:#f2f2f2;"></div>
<svg style="position:absolute;left:430px;top:52px;" width="27" height="25" viewBox="0 0 27 25"><path d="M2 5.600C11 5.600 11 19.600 20 19.600H24M2 19.600C11 19.600 11 5.600 20 5.600H24" fill="none" stroke="#e2e2e2" stroke-linecap="round" stroke-linejoin="round" stroke-width="1.600"/><path d="M18.500 1.600L24.200 5.600L18.500 9.600M18.500 15.600L24.200 19.600L18.500 23.600" fill="none" stroke="#e2e2e2" stroke-linecap="round" stroke-linejoin="round" stroke-width="1.600"/></svg>
<div style="position:absolute;left:63px;top:87px;width:393px;height:35px;background:#666666;border-radius:3px 3px 0 0;"></div>
<span class="t" style="left:73.20px;top:97.80px;font-size:13px;line-height:13px;color:#e4e4e4;font-weight:700;letter-spacing:0.112px;">Дерево правил</span>
<svg style="position:absolute;left:438px;top:101.4px;" width="12" height="6" viewBox="0 0 12 6"><path d="M0.300 0.200h11.400L6 5.800z" fill="#e4e4e4"/></svg>
<div style="position:absolute;left:63px;top:122px;width:393px;height:660.5px;background:#fff;border-radius:0 0 3px 3px;"></div>
<svg style="position:absolute;left:69px;top:127px;" width="12" height="12" viewBox="0 0 12 12"><path d="M3.200 4.300L6 1.500L8.800 4.300M3.200 7.900L6 10.700L8.800 7.900" fill="none" stroke="#3a93b5" stroke-width="1.300"/></svg>
<span class="t" style="left:92.30px;top:128.06px;font-size:9.5px;line-height:9.5px;color:#3a93b5;letter-spacing:1.231px;">Развернуть дерево</span>
<svg style="position:absolute;left:373px;top:127.5px;" width="19" height="11" viewBox="0 0 19 11"><path d="M0.900 4.400L5.600 9.600M5.400 5.800L8.800 9.600L17.500 0.900M9.600 7L15.200 0.900" fill="none" stroke="#3a93b5" stroke-width="1.300"/></svg>
<svg style="position:absolute;left:395px;top:125.5px;" width="15" height="14.5" viewBox="0 0 15 14.5"><path d="M2 13.400V9.500Q2 4.600 7 4.600H12.300M8.600 0.900L12.600 4.600L8.600 8.300" fill="none" stroke="#3a93b5" stroke-width="1.400"/></svg>
<svg style="position:absolute;left:415px;top:126px;" width="14" height="14.5" viewBox="0 0 14 14.5"><path d="M1 2.300H13M4.600 1.200H9.400" stroke="#f44336" stroke-width="1.300" fill="none"/><path d="M2.300 2.600V12.600Q2.300 13.300 3 13.300H11Q11.700 13.300 11.700 12.600V2.600" stroke="#f44336" stroke-width="1.300" fill="none"/><path d="M5.400 4.400V11.300M8.600 4.400V11.300" stroke="#f44336" stroke-width="1.200" fill="none"/></svg>
<svg style="position:absolute;left:434px;top:125px;" width="17" height="17" viewBox="0 0 17 17"><circle cx="8.400" cy="8.300" r="6.700" fill="none" stroke="#3a93b5" stroke-width="1.300"/><path d="M3.700 3.500L13.100 13.100" stroke="#3a93b5" stroke-width="1.300"/></svg>
<span class="t" style="left:85.30px;top:149.04px;font-size:12px;line-height:12px;color:#222;font-weight:700;transform:scaleX(0.9240);">Группа АР</span>
<svg style="position:absolute;left:72.7px;top:153.8px;" width="7" height="4" viewBox="0 0 7 4"><path d="M0.200 0.200h6.600L3.500 3.700z" fill="#6a6a6a"/></svg>
<svg style="position:absolute;left:437px;top:148.7px" width="13" height="13" viewBox="0 0 13 13"><rect x="0" y="0" width="13" height="13" rx="1.800" fill="#3a93b5"/><rect x="2.600" y="5.600" width="8" height="2" fill="#fff"/></svg>
<span class="t" style="left:95.30px;top:173.04px;font-size:12px;line-height:12px;color:#222;-webkit-text-stroke:0.2px #222;transform:scaleX(0.9025);">АР-ОВ</span>
<svg style="position:absolute;left:437px;top:172.7px" width="13" height="13" viewBox="0 0 13 13"><rect x="0.650" y="0.650" width="11.7" height="11.7" rx="0.800" fill="#fff" stroke="#3a93b5" stroke-width="1.300"/></svg>
<span class="t" style="left:95.30px;top:197.04px;font-size:12px;line-height:12px;color:#222;-webkit-text-stroke:0.2px #222;transform:scaleX(0.9990);">Тест</span>
<svg style="position:absolute;left:437px;top:196.7px" width="13" height="13" viewBox="0 0 13 13"><rect x="0.650" y="0.650" width="11.7" height="11.7" rx="0.800" fill="#fff" stroke="#3a93b5" stroke-width="1.300"/></svg>
<span class="t" style="left:95.30px;top:221.04px;font-size:12px;line-height:12px;color:#222;-webkit-text-stroke:0.2px #222;letter-spacing:0.094px;">Атрибуты</span>
<svg style="position:absolute;left:437px;top:220.7px" width="13" height="13" viewBox="0 0 13 13"><rect x="0.650" y="0.650" width="11.7" height="11.7" rx="0.800" fill="#fff" stroke="#3a93b5" stroke-width="1.300"/></svg>
<span class="t" style="left:95.30px;top:245.04px;font-size:12px;line-height:12px;color:#222;-webkit-text-stroke:0.2px #222;transform:scaleX(0.9629);">АР-ВК</span>
<svg style="position:absolute;left:437px;top:244.7px" width="13" height="13" viewBox="0 0 13 13"><rect x="0.650" y="0.650" width="11.7" height="11.7" rx="0.800" fill="#fff" stroke="#3a93b5" stroke-width="1.300"/></svg>
<span class="t" style="left:95.30px;top:269.04px;font-size:12px;line-height:12px;color:#222;-webkit-text-stroke:0.2px #222;letter-spacing:0.336px;">Дубликаты</span>
<svg style="position:absolute;left:437px;top:268.7px" width="13" height="13" viewBox="0 0 13 13"><rect x="0.650" y="0.650" width="11.7" height="11.7" rx="0.800" fill="#fff" stroke="#3a93b5" stroke-width="1.300"/></svg>
<span class="t" style="left:95.30px;top:293.04px;font-size:12px;line-height:12px;color:#222;-webkit-text-stroke:0.2px #222;transform:scaleX(1.1183);">вк</span>
<svg style="position:absolute;left:437px;top:292.7px" width="13" height="13" viewBox="0 0 13 13"><rect x="0.650" y="0.650" width="11.7" height="11.7" rx="0.800" fill="#fff" stroke="#3a93b5" stroke-width="1.300"/></svg>
<span class="t" style="left:95.30px;top:317.04px;font-size:12px;line-height:12px;color:#222;font-weight:700;transform:scaleX(0.9411);">Атрибуты</span>
<svg style="position:absolute;left:82.7px;top:321.8px;" width="7" height="4" viewBox="0 0 7 4"><path d="M0.200 0.200h6.600L3.500 3.700z" fill="#6a6a6a"/></svg>
<svg style="position:absolute;left:437px;top:316.7px" width="13" height="13" viewBox="0 0 13 13"><rect x="0" y="0" width="13" height="13" rx="1.800" fill="#3a93b5"/><path d="M2.70 6.70L5.30 9.30L10.50 3.70" fill="none" stroke="#fff" stroke-width="1.50"/></svg>
<span class="t" style="left:105.20px;top:341.04px;font-size:12px;line-height:12px;color:#222;-webkit-text-stroke:0.2px #222;transform:scaleX(0.9881);">Стена наружная_Материал</span>
<svg style="position:absolute;left:437px;top:340.7px" width="13" height="13" viewBox="0 0 13 13"><rect x="0" y="0" width="13" height="13" rx="1.800" fill="#3a93b5"/><path d="M2.70 6.70L5.30 9.30L10.50 3.70" fill="none" stroke="#fff" stroke-width="1.50"/></svg>
<span class="t" style="left:105.20px;top:365.04px;font-size:12px;line-height:12px;color:#222;-webkit-text-stroke:0.2px #222;transform:scaleX(0.9953);">Стена наружная_Геометрия</span>
<svg style="position:absolute;left:437px;top:364.7px" width="13" height="13" viewBox="0 0 13 13"><rect x="0" y="0" width="13" height="13" rx="1.800" fill="#3a93b5"/><path d="M2.70 6.70L5.30 9.30L10.50 3.70" fill="none" stroke="#fff" stroke-width="1.50"/></svg>
<span class="t" style="left:85.30px;top:389.04px;font-size:12px;line-height:12px;color:#222;font-weight:700;transform:scaleX(0.9294);">Группа ВК</span>
<svg style="position:absolute;left:72.7px;top:393.8px;" width="7" height="4" viewBox="0 0 7 4"><path d="M0.200 0.200h6.600L3.500 3.700z" fill="#6a6a6a"/></svg>
<svg style="position:absolute;left:437px;top:388.7px" width="13" height="13" viewBox="0 0 13 13"><rect x="0.650" y="0.650" width="11.7" height="11.7" rx="0.800" fill="#fff" stroke="#3a93b5" stroke-width="1.300"/></svg>
<span class="t" style="left:95.30px;top:413.04px;font-size:12px;line-height:12px;color:#222;-webkit-text-stroke:0.2px #222;transform:scaleX(0.9745);">ВК-ОВ_допуск 10</span>
<svg style="position:absolute;left:437px;top:412.7px" width="13" height="13" viewBox="0 0 13 13"><rect x="0.650" y="0.650" width="11.7" height="11.7" rx="0.800" fill="#fff" stroke="#3a93b5" stroke-width="1.300"/></svg>
<span class="t" style="left:95.30px;top:437.04px;font-size:12px;line-height:12px;color:#222;-webkit-text-stroke:0.2px #222;transform:scaleX(0.9111);">ВК-ОВ</span>
<svg style="position:absolute;left:437px;top:436.7px" width="13" height="13" viewBox="0 0 13 13"><rect x="0.650" y="0.650" width="11.7" height="11.7" rx="0.800" fill="#fff" stroke="#3a93b5" stroke-width="1.300"/></svg>
<span class="t" style="left:95.30px;top:461.04px;font-size:12px;line-height:12px;color:#222;font-weight:700;transform:scaleX(0.9411);">Атрибуты</span>
<svg style="position:absolute;left:84.7px;top:463.5px;" width="4" height="7" viewBox="0 0 4 7"><path d="M0.300 0.200v6.600L3.800 3.500z" fill="#6a6a6a"/></svg>
<svg style="position:absolute;left:437px;top:460.7px" width="13" height="13" viewBox="0 0 13 13"><rect x="0.650" y="0.650" width="11.7" height="11.7" rx="0.800" fill="#fff" stroke="#3a93b5" stroke-width="1.300"/></svg>
<span class="t" style="left:85.30px;top:485.04px;font-size:12px;line-height:12px;color:#222;font-weight:700;transform:scaleX(0.9552);">для презентации</span>
<svg style="position:absolute;left:74.7px;top:487.5px;" width="4" height="7" viewBox="0 0 4 7"><path d="M0.300 0.200v6.600L3.800 3.500z" fill="#6a6a6a"/></svg>
<svg style="position:absolute;left:437px;top:484.7px" width="13" height="13" viewBox="0 0 13 13"><rect x="0.650" y="0.650" width="11.7" height="11.7" rx="0.800" fill="#fff" stroke="#3a93b5" stroke-width="1.300"/></svg>
<span class="t" style="left:85.30px;top:509.04px;font-size:12px;line-height:12px;color:#222;font-weight:700;transform:scaleX(0.9359);">Коллизии</span>
<svg style="position:absolute;left:74.7px;top:511.5px;" width="4" height="7" viewBox="0 0 4 7"><path d="M0.300 0.200v6.600L3.800 3.500z" fill="#6a6a6a"/></svg>
<svg style="position:absolute;left:437px;top:508.7px" width="13" height="13" viewBox="0 0 13 13"><rect x="0.650" y="0.650" width="11.7" height="11.7" rx="0.800" fill="#fff" stroke="#3a93b5" stroke-width="1.300"/></svg>
<span class="t" style="left:85.30px;top:533.04px;font-size:12px;line-height:12px;color:#222;font-weight:700;transform:scaleX(0.9528);">Проверка атрибута</span>
<svg style="position:absolute;left:74.7px;top:535.5px;" width="4" height="7" viewBox="0 0 4 7"><path d="M0.300 0.200v6.600L3.800 3.500z" fill="#6a6a6a"/></svg>
<svg style="position:absolute;left:437px;top:532.7px" width="13" height="13" viewBox="0 0 13 13"><rect x="0.650" y="0.650" width="11.7" height="11.7" rx="0.800" fill="#fff" stroke="#3a93b5" stroke-width="1.300"/></svg>
<span class="t" style="left:85.30px;top:557.04px;font-size:12px;line-height:12px;color:#222;font-weight:700;transform:scaleX(0.9534);">Проверка на нормативы</span>
<svg style="position:absolute;left:74.7px;top:559.5px;" width="4" height="7" viewBox="0 0 4 7"><path d="M0.300 0.200v6.600L3.800 3.500z" fill="#6a6a6a"/></svg>
<svg style="position:absolute;left:437px;top:556.7px" width="13" height="13" viewBox="0 0 13 13"><rect x="0.650" y="0.650" width="11.7" height="11.7" rx="0.800" fill="#fff" stroke="#3a93b5" stroke-width="1.300"/></svg>
<div style="position:absolute;left:464.3px;top:469px;width:1.3px;height:27px;background:#3a93b5;"></div>
<svg style="position:absolute;left:340px;top:130px;" width="120" height="120" viewBox="0 0 120 120"><defs><filter id="ash" x="-20%" y="-20%" width="150%" height="150%"><feGaussianBlur stdDeviation="1.500"/></filter></defs><g transform="translate(3.200 3.400)" filter="url(#ash)" opacity="0.550"><path d="M19.700 100.700L82.800 23.600L77.100 20.400L91.700 13.900L88.100 29.200L85.200 25.600L21.300 102z" fill="#000"/></g><path d="M19.700 100.700L82.800 23.600L77.100 20.400L91.700 13.900L88.100 29.200L85.200 25.600L21.300 102z" fill="#c00000"/></svg>
<div style="position:absolute;left:479px;top:347px;width:1296px;height:443px;background:#545454;"></div>
<div style="position:absolute;left:1103px;top:351px;width:48px;height:3px;background:#3a93b5;"></div>
<svg style="position:absolute;left:490.9px;top:361.6px;" width="20" height="20" viewBox="0 0 24 24"><path d="M3 18h18v-2H3v2zm0-5h18v-2H3v2zm0-7v2h18V6H3z" fill="#e2e2e2"/></svg>
<span class="t" style="left:523.30px;top:363.76px;font-size:16px;line-height:16px;color:#e2e2e2;-webkit-text-stroke:0.2px #e2e2e2;letter-spacing:0.185px;">Расчеты</span>
<svg style="position:absolute;left:1715.8px;top:365.7px;" width="15.2" height="11.1" viewBox="0 0 15.2 11.1"><path d="M0 0h3.100v11.100H0zM4 0h3.100v11.100H4zM8 0h3.100v11.100H8zM12 0h3.100v11.100H12z" fill="#e2e2e2"/></svg>
<svg style="position:absolute;left:1747px;top:368px;" width="12" height="8" viewBox="0 0 12 8"><path d="M1 1.200L6 6.200L11 1.200" fill="none" stroke="#e2e2e2" stroke-width="1.500"/></svg>
<div style="position:absolute;left:479px;top:390px;width:1296px;height:32px;background:#666666;"></div>
<div style="position:absolute;left:479px;top:390px;width:60px;height:32px;background:#fff;"></div>
<svg style="position:absolute;left:497.7px;top:397.7px" width="15" height="15" viewBox="0 0 15 15"><rect x="0" y="0" width="15" height="15" rx="1.800" fill="#3a93b5"/><path d="M3.12 7.73L6.12 10.73L12.12 4.27" fill="none" stroke="#fff" stroke-width="1.73"/></svg>
<span class="t" style="left:554.80px;top:400.14px;font-size:12px;line-height:12px;color:#e6e6e6;font-weight:700;transform:scaleX(0.9999);">Имя</span>
<span class="t" style="left:825.10px;top:400.14px;font-size:12px;line-height:12px;color:#e6e6e6;font-weight:700;transform:scaleX(0.9391);">Правило</span>
<span class="t" style="left:925.40px;top:400.14px;font-size:12px;line-height:12px;color:#e6e6e6;font-weight:700;transform:scaleX(0.9521);">Статус</span>
<span class="t" style="left:995.30px;top:400.14px;font-size:12px;line-height:12px;color:#e6e6e6;font-weight:700;transform:scaleX(0.9801);">Раздел</span>
<span class="t" style="left:1195.90px;top:400.14px;font-size:12px;line-height:12px;color:#e6e6e6;font-weight:700;transform:scaleX(0.9629);">Элемент (Модель А)</span>
<span class="t" style="left:1395.90px;top:400.14px;font-size:12px;line-height:12px;color:#e6e6e6;font-weight:700;transform:scaleX(0.9604);">Элемент (Модель В)</span>
<span class="t" style="left:1595.60px;top:400.14px;font-size:12px;line-height:12px;color:#e6e6e6;font-weight:700;transform:scaleX(0.9597);">Выборка</span>
<div style="position:absolute;left:479px;top:422px;width:1286px;height:358px;background:#fff;"></div>
<div style="position:absolute;left:479px;top:458px;width:1286px;height:1px;background:#dcdcdc;"></div>
<span class="t" style="left:1329.40px;top:432.45px;font-size:14px;line-height:14px;color:#3a3a3a;-webkit-text-stroke:0.2px #3a3a3a;letter-spacing:0.112px;">Отсутствуют данные</span>
<div style="position:absolute;left:1765px;top:390px;width:10px;height:400px;background:#666666;"></div>
<div style="position:absolute;left:479px;top:780px;width:1296px;height:10px;background:#666666;"></div>
<svg style="position:absolute;left:1766px;top:394px;" width="8" height="4" viewBox="0 0 8 4"><path d="M0.600 3.400L4 0.400L7.400 3.400z" fill="#3a93b5"/></svg>
<div style="position:absolute;left:1767px;top:402.5px;width:6px;height:356.5px;background:#3a93b5;border-radius:3px;"></div>
<svg style="position:absolute;left:1766px;top:772.5px;" width="8" height="4" viewBox="0 0 8 4"><path d="M0.600 0.400L4 3.400L7.400 0.400z" fill="#3a93b5"/></svg>
<svg style="position:absolute;left:481.5px;top:781.5px;" width="4" height="7" viewBox="0 0 4 7"><path d="M3.600 0.400L0.400 3.500L3.600 6.600z" fill="#3a93b5"/></svg>
<div style="position:absolute;left:491px;top:782.3px;width:882.5px;height:5.8px;background:#3a93b5;border-radius:3px;"></div>
<svg style="position:absolute;left:1758.5px;top:781.5px;" width="4" height="7" viewBox="0 0 4 7"><path d="M0.400 0.400L3.600 3.500L0.400 6.600z" fill="#3a93b5"/></svg>
<div style="position:absolute;left:1783px;top:37px;width:36px;height:757px;background:#545454;"></div>
<div style="position:absolute;left:1783px;top:76.5px;width:36px;height:1.2px;background:#2c2c2c;"></div>
<div style="position:absolute;left:1783px;top:169.6px;width:36px;height:1.2px;background:#2c2c2c;"></div>
<div style="position:absolute;left:1783px;top:482.5px;width:36px;height:1.2px;background:#2c2c2c;"></div>
<div style="position:absolute;left:1783px;top:531.5px;width:36px;height:1.2px;background:#2c2c2c;"></div>
<div style="position:absolute;left:1783px;top:712.5px;width:36px;height:2px;background:#2a2a2a;"></div>
<div style="position:absolute;left:1785px;top:722px;width:32px;height:32px;background:#898989;"></div>
<div style="position:absolute;left:1785px;top:766px;width:32px;height:28px;background:#898989;"></div>
<svg style="position:absolute;left:1783px;top:0" width="36" height="794" viewBox="0 0 36 794"><path d="M9.200000000000045 53.3V48.3H14.200000000000045M22 48.3H27V53.3M27 60.400000000000006V65.4H22M14.200000000000045 65.4H9.200000000000045V60.400000000000006" fill="none" stroke="#e0e0e0" stroke-width="1.1"/><polygon points="22.59,59.65 18.00,62.30 13.41,59.65 13.41,54.35 18.00,51.70 22.59,54.35" fill="#e0e0e0"/><path d="M18.09999999999991 113.800V98.500M18.09999999999991 106.500L13.299999999999955 102M18.09999999999991 108.600L22.59999999999991 104.600" fill="none" stroke="#e0e0e0" stroke-width="1.300"/><path d="M15.5 108.300H12C5.599999999999909 108.300 5.599999999999909 98.500 11.599999999999909 98.300C12 89.500 24.5 89.500 24.799999999999955 98.300C31 98.500 31 108.300 24.5 108.300H20.799999999999955" fill="none" stroke="#e0e0e0" stroke-width="1.300"/><path d="M29.09999999999991 140.500V133.500H5.2999999999999545V150.600H13.599999999999909V153.200H10.200000000000045" fill="none" stroke="#e0e0e0" stroke-width="1.200"/><path d="M15.299999999999955 146.8V142.5H19.599999999999955M26.400000000000045 142.5H30.700000000000045V146.8M30.700000000000045 154.2V158.5H26.400000000000045M19.599999999999955 158.5H15.299999999999955V154.2" fill="none" stroke="#e0e0e0" stroke-width="1.2"/><polygon points="26.98,153.00 23.00,155.30 19.02,153.00 19.02,148.40 23.00,146.10 26.98,148.40" fill="#e0e0e0"/><rect x="8.299999999999955" y="191.100" width="19.600" height="6.200" fill="none" stroke="#e0e0e0" stroke-width="1.100"/><path d="M11.5 197V194.500M14.700000000000045 197V194.500M17.90000000000009 197V194.500M21.09999999999991 197V194.500M24.299999999999955 197V194.500" fill="none" stroke="#e0e0e0" stroke-width="1"/><path d="M8 199.700H28.200000000000045" fill="none" stroke="#e0e0e0" stroke-width="1.100"/><path d="M3.900000000000091 204.900V209.400H8.299999999999955z" fill="#e0e0e0"/><path d="M5.2000000000000455 241.500L13.200000000000045 235.500H31L23 241.500z" fill="none" stroke="#e0e0e0" stroke-width="1.100"/><path d="M13 233.100L23 225V244.700L13 253z" fill="#e0e0e0"/><path d="M6.400000000000091 277H22.299999999999955V293.300H6.400000000000091zM13.700000000000045 272.300H29.700000000000045V288.600H13.700000000000045zM6.400000000000091 277L13.700000000000045 272.300M22.299999999999955 277L29.700000000000045 272.300M22.299999999999955 293.300L29.700000000000045 288.600M6.400000000000091 293.300L13.700000000000045 288.600" fill="none" stroke="#e0e0e0" stroke-width="1.100"/><path d="M15.599999999999909 277L20.40000000000009 273.400V289.800L15.599999999999909 293.300z" fill="#e0e0e0"/><path d="M8 316.400H30V335.500H4.599999999999909V319.600z" fill="none" stroke="#e0e0e0" stroke-width="1.200"/><path d="M30.59999999999991 318V336.800H6" fill="none" stroke="#e0e0e0" stroke-width="2.200"/><path d="M16.59999999999991 317V335M5 325.600H30" fill="none" stroke="#e0e0e0" stroke-width="1" stroke-dasharray="3 1.500"/><path d="M22.59999999999991 335V332.300H29.59999999999991" fill="none" stroke="#e0e0e0" stroke-width="1"/><path d="M4.599999999999909 319.600H8V316.400" fill="none" stroke="#e0e0e0" stroke-width="1"/><circle cx="17.90000000000009" cy="371" r="7.800" fill="none" stroke="#e0e0e0" stroke-width="1.800"/><circle cx="17.90000000000009" cy="371" r="4" fill="#e0e0e0"/><path d="M17.90000000000009 360V363M17.90000000000009 379V382M6.900000000000091 371H9.900000000000091M25.90000000000009 371H28.90000000000009" fill="none" stroke="#e0e0e0" stroke-width="1.800"/><circle cx="17.799999999999955" cy="414.800" r="12.500" fill="none" stroke="#e0e0e0" stroke-width="1"/><path d="M12.5 422V408.600Q16 407.200 19.299999999999955 408.800T26 410.300V417.100Q22.59999999999991 417.800 19.299999999999955 416.100T12.5 416" fill="none" stroke="#e0e0e0" stroke-width="1.100"/><text x="6.2999999999999545" y="456.800" font-family="DejaVu Sans,sans-serif" font-weight="700" font-size="13.500" fill="#e0e0e0">S</text><path d="M19.5 448.3L28.3 448.3L28.3 469.2L7.3 469.2L7.3 460.5L19.5 460.5z" fill="none" stroke="#e0e0e0" stroke-width="0.900" stroke-dasharray="1.200 1.200"/><rect x="18.0" y="446.8" width="3" height="3" fill="#e0e0e0"/><rect x="26.8" y="446.8" width="3" height="3" fill="#e0e0e0"/><rect x="26.8" y="467.7" width="3" height="3" fill="#e0e0e0"/><rect x="5.8" y="467.7" width="3" height="3" fill="#e0e0e0"/><rect x="5.8" y="459.0" width="3" height="3" fill="#e0e0e0"/><rect x="18.0" y="459.0" width="3" height="3" fill="#e0e0e0"/><path d="M5.099999999999909 511.600L32 496.100M5.099999999999909 520.700L32 505.400M6.2000000000000455 506.500L23.200000000000045 516.200M13.900000000000091 501.200L31.09999999999991 510.500" fill="none" stroke="#e0e0e0" stroke-width="1"/><text x="5.2999999999999545" y="505.300" font-size="5.500" fill="#e0e0e0" font-family="Liberation Sans,sans-serif">1</text><text x="14.299999999999955" y="499" font-size="5.500" fill="#e0e0e0" font-family="Liberation Sans,sans-serif">2</text><rect x="6.2999999999999545" y="545.3" width="23.500" height="23.400" fill="none" stroke="#e0e0e0" stroke-width="1.200" stroke-dasharray="2.100 1.800"/><rect x="6.2999999999999545" y="589.2" width="23.500" height="23.400" fill="none" stroke="#e0e0e0" stroke-width="1.200" stroke-dasharray="2.100 1.800"/><rect x="6.2999999999999545" y="633" width="23.500" height="23.400" fill="none" stroke="#e0e0e0" stroke-width="1.200" stroke-dasharray="2.100 1.800"/><rect x="6.2999999999999545" y="677.2" width="23.500" height="23.400" fill="none" stroke="#e0e0e0" stroke-width="1.200" stroke-dasharray="2.100 1.800"/><polygon points="23.36,560.15 17.90,563.30 12.44,560.15 12.44,553.85 17.90,550.70 23.36,553.85" fill="none" stroke="#e0e0e0" stroke-width="1" stroke-linejoin="round"/><path d="M12.45 553.85L17.90000000000009 557L23.35 553.85M17.90000000000009 557V563.3" fill="none" stroke="#e0e0e0" stroke-width="1"/><path d="M10.800000000000045 601Q18.200000000000045 591.2 25.600000000000044 601Q18.200000000000045 610.8 10.800000000000045 601z" fill="#e0e0e0"/><circle cx="18.200000000000045" cy="601" r="3.100" fill="#545454"/><circle cx="18.200000000000045" cy="601" r="1.600" fill="#e0e0e0"/><path d="M10.50000000000009 644.7Q17.90000000000009 634.9000000000001 25.30000000000009 644.7Q17.90000000000009 654.5 10.50000000000009 644.7z" fill="#e0e0e0"/><circle cx="17.90000000000009" cy="644.7" r="3.100" fill="#545454"/><circle cx="17.90000000000009" cy="644.7" r="1.600" fill="#e0e0e0"/><path d="M10.599999999999909 639.300L23.59999999999991 651.800" stroke="#545454" stroke-width="1.500"/><path d="M11.299999999999955 638.500L24.299999999999955 651.400" stroke="#e0e0e0" stroke-width="1.100"/><rect x="15.799999999999955" y="687.400" width="16" height="15.300" fill="#e0e0e0"/><path d="M19.59999999999991 691.400L28.200000000000045 699M28.200000000000045 691.400L19.59999999999991 699" stroke="#333" stroke-width="1" fill="none"/><path d="M8.200000000000045 730L18 733.300V748.700L9.799999999999955 741.400z" fill="#e4e4e4"/><path d="M18 733.300L27.700000000000045 730L26.90000000000009 741.400L18 748.700z" fill="#7a7a7a" stroke="#e4e4e4" stroke-width="0.800"/><path d="M8.200000000000045 730L16.299999999999955 728.100L27.700000000000045 730L18 733.300z" fill="#8e8e8e" stroke="#e4e4e4" stroke-width="1"/><ellipse cx="18.40000000000009" cy="781.700" rx="11.300" ry="5.600" fill="none" stroke="#e0e0e0" stroke-width="1.900"/><ellipse cx="18.40000000000009" cy="781.700" rx="5" ry="10.300" fill="none" stroke="#e0e0e0" stroke-width="1.900"/><path d="M18.40000000000009 777V781.500L15.599999999999909 784.500M18.40000000000009 781.500L21.200000000000045 784.500" fill="none" stroke="#e0e0e0" stroke-width="0.800"/></svg>
</body></html>
